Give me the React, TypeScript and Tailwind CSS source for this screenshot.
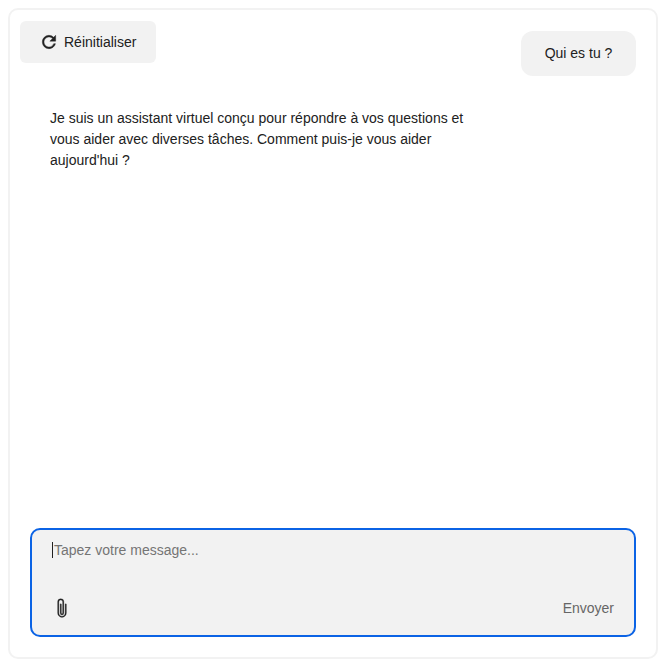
import React from 'react';
import { BsPaperclip } from 'react-icons/bs';

function RefreshIcon() {
  return (
    <svg viewBox="0 0 24 24" className="h-5 w-5 text-[#212121]" fill="currentColor" stroke="currentColor" strokeWidth={0.5}>
      <path d="M17.65 6.35A7.958 7.958 0 0 0 12 4c-4.42 0-7.99 3.58-7.99 8s3.57 8 7.99 8c3.73 0 6.84-2.55 7.73-6h-2.08A5.99 5.99 0 0 1 12 18c-3.31 0-6-2.69-6-6s2.69-6 6-6c1.66 0 3.14.69 4.22 1.78L13 11h7V4l-2.35 2.35z" />
    </svg>
  );
}

export default function App() {
  return (
    <div className="h-[670px] w-[668px] bg-white p-[8px_10px_11px_8px] font-['Liberation_Sans',sans-serif] text-sm text-[#212121]">
      <div className="flex h-[651px] w-[650px] flex-col rounded-[10px] border-2 border-[#f2f2f2] bg-white">
        {/* Top of the conversation */}
        <div className="flex items-start justify-between pl-[10px] pr-[20px] pt-[11px]">
          <button className="flex h-[42px] w-[136px] items-center gap-[5px] rounded-md bg-[#f2f2f2] pl-[19px]">
            <RefreshIcon />
            <span>Réinitialiser</span>
          </button>
          <div className="mt-[10px] flex h-[45px] w-[115px] items-center justify-center rounded-xl bg-[#f2f2f2] pb-px">
            Qui es tu ?
          </div>
        </div>

        {/* Assistant reply */}
        <p className="mt-[32px] w-[480px] flex-1 pl-[40px] leading-[21px]">
          Je suis un assistant virtuel conçu pour répondre à vos questions et vous aider avec diverses tâches. Comment puis-je vous aider aujourd'hui ?
        </p>

        {/* Composer */}
        <div className="mb-[20px] ml-[20px] flex h-[109px] w-[606px] flex-col justify-between rounded-[10px] border-2 border-[#0b63e5] bg-[#f2f2f2] pb-[17px] pl-[20px] pr-[20px] pt-[11px]">
          <div className="flex h-[18px] items-center">
            <span className="h-[16px] w-px bg-[#212121]" />
            <span className="ml-px text-[#757575]">Tapez votre message...</span>
          </div>
          <div className="flex items-center justify-between">
            <BsPaperclip className="h-5 w-5 text-[#212121]" stroke="currentColor" strokeWidth={0.2} />
            <span className="text-[#666666]">Envoyer</span>
          </div>
        </div>
      </div>
    </div>
  );
}
